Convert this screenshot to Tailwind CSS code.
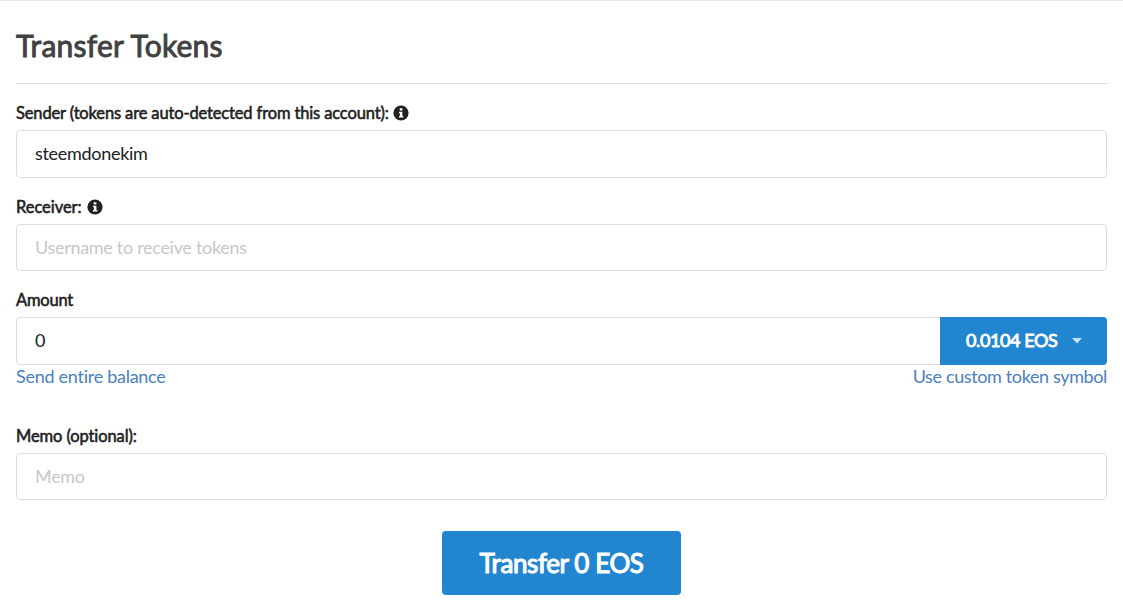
<!DOCTYPE html>
<html lang="en">
<head>
    <meta charset="UTF-8">
    <meta name="viewport" content="width=device-width, initial-scale=1.0">
    <title>Transfer Tokens</title>
    <script src="https://cdn.jsdelivr.net/npm/@tailwindcss/browser@4"></script>
</head>
<body class="bg-white font-['Lato',sans-serif] text-[#212121] overflow-hidden">
    <main class="h-[612px] border-t border-[#e4e5e6] px-4">
        <h1 class="h-[83px] pt-[24px] border-b border-[#dfe0e1] text-[30px] leading-[40px] font-normal tracking-[0.2px] [-webkit-text-stroke:0.9px] text-[#414141]">Transfer Tokens</h1>

        <form>
            <!-- Sender -->
            <div class="pt-[18px]">
                <label class="flex items-center h-[22px] mb-[6px] text-[16.5px] tracking-[-0.14px] [-webkit-text-stroke:0.55px]">
                    Sender (tokens are auto-detected from this account):
                    <svg class="ml-[4px] size-4" viewBox="0 0 16 16"><circle cx="8" cy="8" r="7.6" fill="#212121"/><path d="M6.7 3.3h2.7v2.2H6.7zM6 6.8h3.4v4.1h.9v1.5H6v-1.5h.9V8.3H6z" fill="#fff"/></svg>
                </label>
                <input type="text" value="steemdonekim" class="block w-full h-12 px-[18px] pb-[2px] border border-[#dedede] rounded text-[18px] tracking-[-0.3px]">
            </div>

            <!-- Receiver -->
            <div class="pt-[18px]">
                <label class="flex items-center h-[22px] mb-[6px] text-[16.5px] tracking-[-0.05px] [-webkit-text-stroke:0.55px]">
                    Receiver:
                    <svg class="ml-[5px] size-4" viewBox="0 0 16 16"><circle cx="8" cy="8" r="7.6" fill="#212121"/><path d="M6.7 3.3h2.7v2.2H6.7zM6 6.8h3.4v4.1h.9v1.5H6v-1.5h.9V8.3H6z" fill="#fff"/></svg>
                </label>
                <input type="text" placeholder="Username to receive tokens" class="block w-full h-[47px] px-[18px] pb-[2px] border border-[#dedede] rounded text-[18px] tracking-[-0.3px] placeholder:text-[#c7c7c7]">
            </div>

            <!-- Amount -->
            <div class="pt-[18px]">
                <label class="flex items-center h-[22px] mb-[6px] text-[16.5px] tracking-[-0.2px] [-webkit-text-stroke:0.55px]">Amount</label>
                <div class="flex h-12">
                    <input type="text" value="0" class="flex-1 min-w-0 px-[18px] pb-[2px] border border-r-0 border-[#dedede] rounded-l text-[18px] tracking-[-0.3px]">
                    <button type="button" class="flex items-center w-[167px] pl-[26px] bg-[#2185d0] rounded-r text-white text-[18px] tracking-[-0.4px] [-webkit-text-stroke:0.9px]">
                        <span class="pb-[2px]">0.0104 EOS</span>
                        <svg class="ml-[15px] w-[10px] h-[6px]" viewBox="0 0 10 6"><path d="M0 0h10L5 5.5z" fill="#c8e0f3"/></svg>
                    </button>
                </div>
                <div class="flex justify-between h-6 text-[18px] leading-[22px] tracking-[-0.27px] text-[#4a80bd]">
                    <a href="#">Send entire balance</a>
                    <a href="#" class="tracking-[-0.37px]">Use custom token symbol</a>
                </div>
            </div>

            <!-- Memo -->
            <div class="pt-[36px]">
                <label class="flex items-center h-[22px] mb-[6px] text-[16.5px] tracking-[-0.1px] [-webkit-text-stroke:0.55px]">Memo (optional):</label>
                <input type="text" placeholder="Memo" class="block w-full h-[47px] px-[18px] pb-[2px] border border-[#dedede] rounded text-[18px] tracking-[-0.3px] placeholder:text-[#c7c7c7]">
            </div>

            <button type="button" class="block w-[239px] h-16 mt-[31px] mx-auto bg-[#2185d0] rounded text-white text-[26px] tracking-[-0.4px] [-webkit-text-stroke:1.1px]">Transfer 0 EOS</button>
        </form>
    </main>
</body>
</html>
